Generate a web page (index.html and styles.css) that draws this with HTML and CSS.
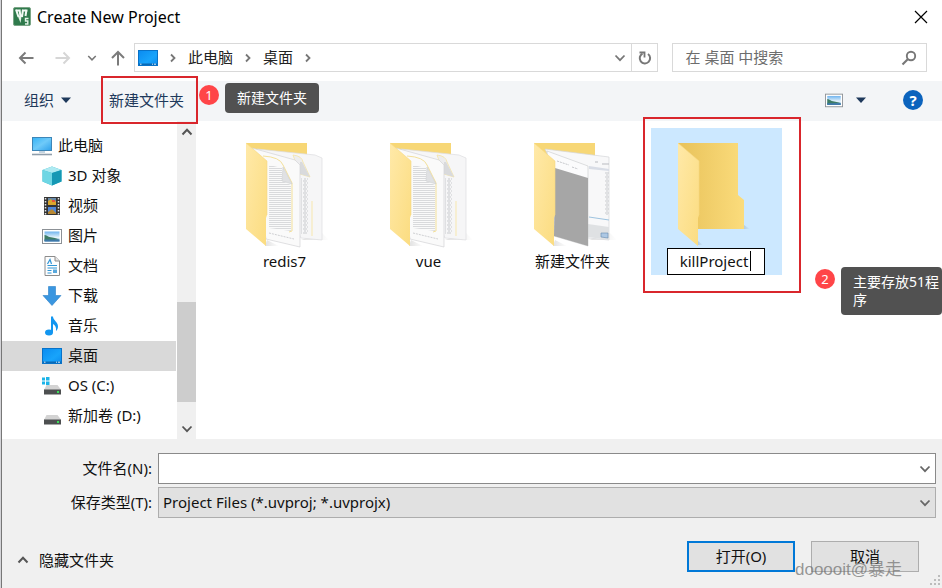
FILE: index.html
```html
<!DOCTYPE html>
<html lang="zh-CN">
<head>
<meta charset="utf-8">
<title>Create New Project</title>
<link rel="stylesheet" href="styles.css">
</head>
<body>
<svg class="defs" aria-hidden="true">
  <defs>
    <linearGradient id="gFront" x1="0" y1="0" x2="1" y2="1"><stop offset="0" stop-color="#ffe9a8"/><stop offset="1" stop-color="#fbdc80"/></linearGradient>
    <linearGradient id="gBack" x1="0" y1="0" x2="1" y2="0"><stop offset="0" stop-color="#e8c25a"/><stop offset="1" stop-color="#fbdc7c"/></linearGradient>
    <linearGradient id="gBlue" x1="0" y1="0" x2="1" y2="1"><stop offset="0" stop-color="#0a8bf0"/><stop offset="0.6" stop-color="#18a4fb"/><stop offset="1" stop-color="#0a8bf0"/></linearGradient>
    <linearGradient id="gScreen" x1="0" y1="0" x2="1" y2="1"><stop offset="0" stop-color="#35b3f6"/><stop offset="0.5" stop-color="#6fcaf9"/><stop offset="1" stop-color="#2ea0ea"/></linearGradient>
    <linearGradient id="gSky" x1="0" y1="0" x2="0" y2="1"><stop offset="0" stop-color="#6fb4ef"/><stop offset="0.6" stop-color="#e6f3fa"/><stop offset="1" stop-color="#5c9ccc"/></linearGradient>
    <linearGradient id="gShade" x1="0" y1="0" x2="1" y2="0"><stop offset="0" stop-color="#000" stop-opacity="0.12"/><stop offset="1" stop-color="#000" stop-opacity="0"/></linearGradient>
    <pattern id="lines" width="24" height="2" patternUnits="userSpaceOnUse"><path d="M0 .5h24" stroke="#d6d7d9" stroke-width="0.9"/></pattern>
    <pattern id="words" width="7" height="4" patternUnits="userSpaceOnUse"><path d="M0 1h4M5 1h1M1 3h2M4 3h2" stroke="#c9cbce" stroke-width="1"/></pattern>
    <pattern id="rows" width="24" height="6" patternUnits="userSpaceOnUse"><path d="M1 2h9M1 5h6" stroke="#b4b7bd" stroke-width="1"/></pattern>

    <symbol id="desktop" viewBox="0 0 20 20">
      <rect x="0.5" y="2.5" width="19" height="15" fill="url(#gBlue)" stroke="#0872c8"/>
      <path d="M1 15.5h18v1.5H1z" fill="#0a69b5"/><path d="M2 16.2h1.5M14 16.2h1M16 16.2h2" stroke="#d8f0ff"/>
    </symbol>
    <symbol id="picture" viewBox="0 0 20 20">
      <rect x="0.5" y="3.5" width="19" height="14" fill="#fff" stroke="#8c9196"/>
      <path d="M2.500 5.500h15v10h-15z" fill="url(#gSky)"/>
      <path d="M2.500 9c2 0 3 1.500 5 2 4 .5 7 1.500 10 2.500l-15 1.500z" fill="#3d7c66"/>
      <path d="M2.500 13.500h15v2h-15z" fill="#3e78a8"/>
    </symbol>
    <symbol id="folder-front" viewBox="0 0 131 120">
      <path d="M27 15 48 33V87l-1 3v28L27 101z" fill="url(#gFront)"/>
      <path d="M27 15 48 33V87" fill="none" stroke="#f6d984" stroke-width="0.6"/>
    </symbol>
    <symbol id="folder-docs" viewBox="0 0 131 120">
      <path d="M82 112h28l-7 -7z" fill="url(#gShade)"/><path d="M48 112l12 6H46z" fill="url(#gShade)"/>
      <path d="M27 15H88V60H50z" fill="#f7d776"/>
      <path d="M38 21 96 27 103 30V112L82 110z" fill="#f6f6f7" stroke="#dcdddf" stroke-width="0.7"/>
      <path d="M82 50h7v56h-7z" fill="url(#words)"/>
      <path d="M93 73V108" stroke="#f7e7ae"/>
      <path d="M74 27q9 1 10 7l7 15-10-3z" fill="#ededee" stroke="#f4e3a4" stroke-width="0.8"/>
      <path d="M83 34 91 49 81 46V34z" fill="#d9dadc"/>
      <path d="M33 20 76 32 81 37V119L47 111z" fill="#fafafa" stroke="#d2d3d6" stroke-width="0.7"/>
      <path d="M50 37 63 40v13l9 4v46l-22-3z" fill="url(#lines)"/>
      <path d="M50 105l25 6" stroke="#cfd0d3" stroke-dasharray="2 1"/>
      <path d="M44 28q17 1 20 9l9 18V103l-3 1" fill="none" stroke="#f3e09a"/>
      <path d="M64 39 73 56 63 53z" fill="#e0e1e3" stroke="#c9cacc" stroke-width="0.5"/>
      <use href="#folder-front" width="131" height="120"/>
    </symbol>
    <symbol id="folder-images" viewBox="0 0 131 120">
      <path d="M82 112h28l-7 -7z" fill="url(#gShade)"/><path d="M48 112l12 6H46z" fill="url(#gShade)"/>
      <path d="M27 15H88V60H50z" fill="#f7d776"/>
      <path d="M38 21 102 29V112L81 110z" fill="#f8f8f9" stroke="#d4d5d8" stroke-width="0.7"/>
      <path d="M82 38 102 41V43L82 41z" fill="#d9dde6"/>
      <path d="M82 44h13v43H82z" fill="url(#rows)"/><path d="M98 44h4v43h-4z" fill="url(#words)"/>
      <path d="M88 34h3M95 36h7" stroke="#b9bbc0"/>
      <path d="M82 89l20 3" stroke="#9ec3df"/><path d="M81 96l21 3v13l-21-3z" fill="#dfe1e3"/><path d="M94 105h7v5l-7-1z" fill="#adc8e4" stroke="#6489ae" stroke-width="0.6"/>
      <path d="M40 23 81 38V118L47 108z" fill="#fbfbfc" stroke="#c8c9cb" stroke-width="0.6"/>
      <path d="M50 33l12 4M65 39l6 2" stroke="#c6c8cc" stroke-dasharray="2 1"/>
      <path d="M48 40 81 50V118L47 108z" fill="#a6a6a6"/>
      <use href="#folder-front" width="131" height="120"/>
    </symbol>
    <symbol id="folder-empty" viewBox="0 0 131 120">
      <path d="M93 101h6l-6-4z" fill="url(#gShade)"/><path d="M47 113l5 4h-5z" fill="url(#gShade)"/>
      <path d="M27 15H87V67l6 5v29H46L30 30z" fill="url(#gBack)"/>
      <use href="#folder-front" width="131" height="120"/>
    </symbol>
    <symbol id="chev-down" viewBox="0 0 12 12"><path d="M1.500 3.500 6 8.200l4.500-4.700" fill="none" stroke="currentColor" stroke-width="1.800"/></symbol>
    <symbol id="chev-up" viewBox="0 0 12 12"><path d="M1.500 8.500 6 3.800l4.500 4.700" fill="none" stroke="currentColor" stroke-width="2"/></symbol>
    <symbol id="chev-right" viewBox="0 0 12 12"><path d="M4 2.500 7.500 6 4 9.500" fill="none" stroke="currentColor" stroke-width="1.800"/></symbol>
    <symbol id="drive" viewBox="0 0 20 20">
      <path d="M4.500 9h11l3 4h-16z" fill="#d3d3d3"/><path d="M2 13h17v5.500H2z" fill="#4d4f50"/><path d="M2 13h17v1H2z" fill="#8f9192"/><path d="M15 15h2v2h-2z" fill="#3be05a"/>
    </symbol>
  </defs>
</svg>

<main class="window">
  <header class="titlebar">
    <svg class="app-icon" viewBox="0 0 20 20"><rect x="1.500" y="0.500" width="17" height="18" rx="1.500" fill="#2f7a4c" stroke="#7aa586"/><path d="M4 2.500 6.500 10M7.500 2.500 8.500 10M11 2.500 10 10M14.500 2.500 13.500 9M4 3.500h4M10.500 3.500h5" fill="none" stroke="#f2faf4" stroke-width="2"/><path d="M6 9.500 8.500 16 9.500 9.500" fill="#e5f5e9"/><path d="M16.500 11.500h-3V14h2.300v3h-2.800" fill="none" stroke="#e5f5e9" stroke-width="1.400"/></svg>
    <h1>Create New Project</h1>
    <button class="icon-btn close" aria-label="关闭"><svg viewBox="0 0 14 14"><path d="M1 1l12 12M13 1 1 13" stroke="#000" stroke-width="1.200"/></svg></button>
  </header>

  <nav class="navbar">
    <button class="icon-btn back" aria-label="后退"><svg viewBox="0 0 16 16"><path d="M15.500 8H2M7.500 2.500 2 8l5.500 5.500" fill="none" stroke="#7b7b7b" stroke-width="2"/></svg></button>
    <button class="icon-btn forward" aria-label="前进" disabled><svg viewBox="0 0 16 16"><path d="M.5 8H14M8.500 2.500 14 8l-5.500 5.500" fill="none" stroke="#d6d6d6" stroke-width="2"/></svg></button>
    <button class="icon-btn recent" aria-label="最近"><svg viewBox="0 0 12 12"><use href="#chev-down"/></svg></button>
    <button class="icon-btn up" aria-label="上移"><svg viewBox="0 0 16 16"><path d="M8 15.500V2M2 8l6-6 6 6" fill="none" stroke="#7b7b7b" stroke-width="2"/></svg></button>
    <div class="address">
      <svg class="ico"><use href="#desktop"/></svg>
      <svg class="sep"><use href="#chev-right"/></svg>
      <a href="#">此电脑</a>
      <svg class="sep"><use href="#chev-right"/></svg>
      <a href="#">桌面</a>
      <svg class="sep"><use href="#chev-right"/></svg>
      <button class="icon-btn drop" aria-label="历史"><svg viewBox="0 0 12 12"><use href="#chev-down"/></svg></button>
      <button class="icon-btn refresh" aria-label="刷新"><svg viewBox="0 0 16 16"><path d="M11 4A5.200 5.200 0 1 1 5.500 3.600" fill="none" stroke="#777" stroke-width="2"/><path d="M2.500 2.500h5V7.500" fill="none" stroke="#777" stroke-width="1.800"/></svg></button>
    </div>
    <div class="search">
      <input type="search" aria-label="搜索" placeholder="在 桌面 中搜索">
      <svg viewBox="0 0 16 16"><circle cx="10" cy="6" r="4.200" fill="none" stroke="#777" stroke-width="1.900"/><path d="M7 9 1.500 14.500" stroke="#777" stroke-width="2.200"/></svg>
    </div>
  </nav>

  <div class="toolbar">
    <button class="tool organize">组织 <svg viewBox="0 0 10 6"><path d="M0 .5h10L5 6z" fill="#1e395b"/></svg></button>
    <div class="marked">
      <button class="tool">新建文件夹</button>
      <span class="frame"></span>
      <span class="badge">1</span>
      <span class="note">新建文件夹</span>
    </div>
    <button class="icon-btn view" aria-label="视图"><svg class="pic"><use href="#picture"/></svg><svg class="tri" viewBox="0 0 10 6"><path d="M0 .5h10L5 6z" fill="#1e395b"/></svg></button>
    <button class="help" aria-label="帮助">?</button>
  </div>

  <div class="content">
    <ul class="tree">
      <li class="root"><svg viewBox="0 0 20 20"><rect x="0.500" y="1.500" width="19" height="13" fill="url(#gScreen)" stroke="#3d86b8"/><path d="M7 15h6v2H7z" fill="#c4d4e0"/><path d="M0 18.500h20" stroke="#8f9eab" stroke-width="1.600"/></svg>此电脑</li>
      <li><svg viewBox="0 0 20 20"><path d="M10 .5 19.500 4v11.500L10 19.500.5 15.500V4z" fill="#35b8cc"/><path d="M.5 4 10 .5 19.500 4 10 7z" fill="#aeeaf2"/><path d="M.5 4 10 7v12.500L.5 15.500z" fill="#6ed6e4"/><path d="M10 7l9.500-3v11.500L10 19.500z" fill="#1598b4"/></svg>3D 对象</li>
      <li><svg viewBox="0 0 20 20"><path d="M2 1h16v18H2z" fill="#343434"/><path d="M3.500 2v17M16.500 2v17" stroke="#e4e4e4" stroke-width="1.500" stroke-dasharray="1.500 1.500"/><path d="M6 2h8v7H6z" fill="#6789a8"/><path d="M6 11h8v7H6z" fill="#4f86d8"/><path d="M6 5l3-2 2 3 3-1v4H6z" fill="#d9a72e"/><path d="M6 16l4-3 4 4v1H6z" fill="#b88832"/><path d="M10 4h3v2h-3z" fill="#e5533c"/></svg>视频</li>
      <li><svg><use href="#picture"/></svg>图片</li>
      <li><svg viewBox="0 0 20 20"><path d="M3 .5h10l4.500 4.500v14.500H3z" fill="#fdfdfd" stroke="#8c8c8c"/><path d="M13 .5V5h4.500" fill="#e5e5e5" stroke="#8c8c8c"/><path d="M5.500 8 8 3.500 9.500 8M5.500 9.500h9.500M5.500 12h9.500M5.500 14.500h4M5.500 17h4" fill="none" stroke="#2f95d6" stroke-width="1.200"/><path d="M11 13.500h4V17h-4z" fill="#58a8dc"/></svg>文档</li>
      <li><svg viewBox="0 0 20 20"><path d="M6.500.5h7v9H19L10 19.500 1 9.500h5.500z" fill="#3a96e0" stroke="#2a7fc8" stroke-width="0.600"/></svg>下载</li>
      <li><svg viewBox="0 0 20 20"><ellipse cx="7" cy="16.500" rx="4" ry="3" fill="#1296f0"/><path d="M9 .5h2c0 4 5 5 5 10 0 2-1 3.500-2 4.500.5-4-1-6-3-7v8.500H9z" fill="#1296f0"/></svg>音乐</li>
      <li class="selected"><svg><use href="#desktop"/></svg>桌面</li>
      <li><svg viewBox="0 0 20 20"><use href="#drive"/><path d="M0 1.500h3v3H0zM4 1h3.500v3.500H4zM0 5.500h3v3H0zM4 5.500h3.500V9H4z" fill="#1cb4e8"/></svg>OS (C:)</li>
      <li><svg><use href="#drive"/></svg>新加卷 (D:)</li>
    </ul>
    <div class="scrollbar">
      <button class="icon-btn" aria-label="向上滚动"><svg><use href="#chev-up"/></svg></button>
      <div class="track"><div class="thumb"></div></div>
      <button class="icon-btn" aria-label="向下滚动"><svg><use href="#chev-down"/></svg></button>
    </div>
    <div class="files">
      <div class="tile"><svg><use href="#folder-docs"/></svg><span>redis7</span></div>
      <div class="tile"><svg><use href="#folder-docs"/></svg><span>vue</span></div>
      <div class="tile"><svg><use href="#folder-images"/></svg><span>新建文件夹</span></div>
      <div class="tile active">
        <svg><use href="#folder-empty"/></svg>
        <div class="rename"><input type="text" aria-label="文件夹名称" value="killProject"><i class="caret"></i></div>
        <span class="frame"></span>
        <span class="badge">2</span>
        <span class="note">主要存放51程<br>序</span>
      </div>
    </div>
  </div>

  <footer class="footer">
    <div class="fields">
      <label for="filename">文件名(N):</label>
      <div class="field"><input id="filename" type="text"><svg><use href="#chev-down"/></svg></div>
      <label for="filetype">保存类型(T):</label>
      <div class="field"><select id="filetype"><option>Project Files (*.uvproj; *.uvprojx)</option></select><svg><use href="#chev-down"/></svg></div>
    </div>
    <div class="actions">
      <button class="hide"><svg><use href="#chev-up"/></svg>隐藏文件夹</button>
      <button class="btn primary">打开(O)</button>
      <button class="btn">取消</button>
    </div>
    <span class="watermark">dooooit@暴走</span>
    <svg class="grip" viewBox="0 0 12 12"><path d="M9 0h2v2H9zM9 4h2v2H9zM5 4h2v2H5zM9 8h2v2H9zM5 8h2v2H5zM1 8h2v2H1z" fill="#bcbcbc"/></svg>
  </footer>
</main>
</body>
</html>
```
FILE: styles.css
```css
* { box-sizing: border-box; }
body {
  margin: 0;
  background: #d4d4d8;
  color: #111;
  font: 15px/20px "Noto Sans", "Noto Sans CJK SC", sans-serif;
}
button, input, select { font: inherit; color: inherit; margin: 0; padding: 0; border: 0; background: none; border-radius: 0; outline: 0; }
svg { display: block; flex: none; }
.defs { position: absolute; width: 0; height: 0; }

.window {
  display: flex;
  flex-direction: column;
  min-height: 100vh;
  margin-left: 1px;
  border-left: 1px solid #777;
  background: #fff;
  overflow: hidden;
}
.icon-btn { display: flex; align-items: center; justify-content: center; flex: none; color: #777; }

.titlebar { display: flex; align-items: center; height: 36px; padding: 0 14px 2px 10px; }
.app-icon { width: 20px; height: 20px; }
.titlebar h1 { flex: 1; margin: 0 0 0 5px; font-size: 16px; font-weight: 400; color: #000; }
.close svg { width: 14px; height: 14px; }

.navbar { display: flex; align-items: center; height: 45px; padding: 0 15px 2px 16px; }
.navbar .icon-btn svg { width: 16px; height: 16px; }
.forward { margin-left: 21px; }
.navbar .recent { margin-left: 16px; }
.navbar .recent svg { width: 10px; height: 10px; }
.up { margin: 0 8px 0 13px; }
.address { display: flex; flex: 1; align-items: center; height: 29px; padding-left: 3px; border: 1px solid #d9d9d9; }
.address .ico { width: 20px; height: 20px; }
.address .sep { width: 12px; height: 12px; margin: 0 9px; color: #777; }
.address a { padding-bottom: 2px; color: #222; text-decoration: none; }
.address .drop { margin-left: auto; padding: 0 5px; }
.navbar .drop svg { width: 12px; height: 12px; }
.address .refresh { align-self: stretch; width: 26px; border-left: 1px solid #d9d9d9; }
.search { display: flex; align-items: center; width: 28%; height: 29px; margin-left: 14px; padding: 0 9px 0 12px; border: 1px solid #d9d9d9; }
.search input { flex: 1; min-width: 0; padding-bottom: 2px; }
.search input::placeholder { color: #6d6d6d; opacity: 1; }
.search svg { width: 16px; height: 16px; }

.toolbar { display: flex; align-items: center; height: 40px; padding: 0 19px 2px 22px; background: #f3f5f7; }
.tool { color: #1e395b; white-space: nowrap; }
.organize { display: flex; align-items: center; gap: 7px; }
.organize svg, .tri { width: 10px; height: 6px; }
.marked { position: relative; margin-left: 38px; }
.frame { position: absolute; border: 2px solid #d9262c; pointer-events: none; z-index: 2; }
.marked .frame { inset: -14px -14px -14px -8px; }
.badge {
  position: absolute;
  z-index: 2;
  width: 20px;
  height: 20px;
  border-radius: 50%;
  background: #ff4548;
  color: #fff;
  font-size: 13px;
  text-align: center;
}
.note {
  position: absolute;
  z-index: 2;
  padding: 6px 12px;
  border-radius: 4px;
  background: #515151;
  color: #fff;
  font-size: 14px;
  line-height: 18px;
  white-space: nowrap;
}
.marked .badge { left: 90px; top: -5px; }
.marked .note { left: 116px; top: -7px; }
.view { gap: 13px; margin-left: auto; }
.pic { width: 18px; height: 18px; }
.help {
  width: 20px;
  height: 20px;
  margin-left: 37px;
  border-radius: 50%;
  background: #0b63bd;
  color: #fff;
  font-weight: 700;
  line-height: 20px;
}

.content { display: flex; flex: 1; }
.tree { width: 174px; margin: 0; padding: 10px 0 8px; list-style: none; }
.tree li { display: flex; align-items: center; gap: 6px; height: 30px; padding: 0 0 2px 40px; }
.tree .root { padding-left: 30px; }
.tree svg { width: 20px; height: 20px; margin-top: 2px; }
.tree .selected { background: #d9d9d9; }
.scrollbar { display: flex; flex-direction: column; width: 19px; margin-left: 1px; background: #f0f0f0; }
.scrollbar .icon-btn { height: 21px; color: #555; }
.scrollbar svg { width: 12px; height: 12px; }
.track { display: flex; flex: 1; flex-direction: column; justify-content: flex-end; padding-bottom: 16px; }
.thumb { height: 100px; background: #cdcdcd; }

.files {
  display: grid;
  flex: 1;
  grid-template-columns: repeat(auto-fill, 131px);
  align-content: start;
  gap: 13px;
  padding: 7px 0 0 23px;
}
.tile { position: relative; text-align: center; }
.tile > svg { width: 131px; height: 120px; }
.tile > span:not([class]) { display: block; line-height: 27px; }
.active { background: #cce8ff; }
.rename { position: relative; width: 98px; margin: 0 auto 0 16px; }
.rename input { display: block; width: 100%; height: 27px; padding: 0 4px 2px 0; border: 1px solid #000; background: #fff; text-align: center; }
.caret { position: absolute; right: 14px; top: 3px; width: 1px; height: 20px; background: #000; }
.active .frame { inset: -11px -19px -18px -8px; }
.active .badge { left: 164px; top: 141px; }
.active .note { left: 190px; top: 139px; padding-right: 3px; text-align: left; }

.footer { position: relative; padding: 14px 6px 16px 0; background: #f0f0f0; }
.fields { display: grid; grid-template-columns: 150px 1fr; column-gap: 6px; row-gap: 3px; align-items: center; }
.fields label { padding-bottom: 2px; text-align: right; }
.field { position: relative; }
.field input, .field select { display: block; width: 100%; height: 31px; padding: 0 4px 2px; border: 1px solid #8a8a8a; background: #fff; appearance: none; }
.field select { border-color: #adadad; background: #e1e1e1; }
.field svg { position: absolute; right: 5px; top: 10px; width: 12px; height: 12px; color: #666; pointer-events: none; }
.actions { display: flex; align-items: center; gap: 16px; margin-top: 23px; padding-right: 17px; }
.hide { display: flex; align-items: center; gap: 10px; margin: 6px auto 0 15px; }
.hide svg { width: 12px; height: 12px; color: #555; }
.btn { width: 108px; height: 31px; padding-bottom: 2px; border: 1px solid #adadad; background: #e1e1e1; }
.btn.primary { border: 2px solid #0078d7; }
.watermark { position: absolute; right: 40px; bottom: 8px; color: rgba(110, 110, 110, 0.7); font: 17px/20px "Liberation Sans", "Noto Sans CJK SC", sans-serif; }
.grip { position: absolute; right: 1px; bottom: 1px; width: 12px; height: 12px; }
```
